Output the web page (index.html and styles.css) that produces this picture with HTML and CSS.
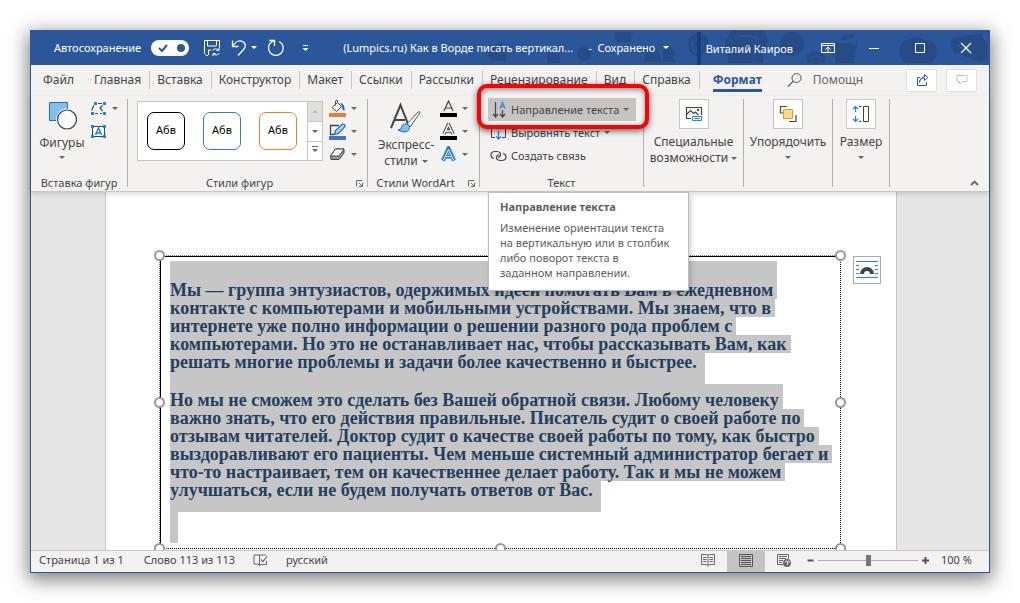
FILE: index.html
```html
<!DOCTYPE html>
<html lang="ru">
<head>
<meta charset="utf-8">
<title>(Lumpics.ru) Как в Ворде писать вертикально</title>
<link rel="stylesheet" href="styles.css">
</head>
<body>
<main class="window">
  <header class="titlebar">
    <svg class="titlebar-art" width="330" height="35" viewBox="0 0 330 35" aria-hidden="true">
      <g fill="#264b86">
        <path d="M-172 22l6-4 6-6 3 1-1 5h5v13h-14z"/>
        <path d="M-44 2h18l-3 10H-42zM-41 14l-7 6M-112 22l13 2v9h-13zM-14 17h12l3 9 2 6H-16l3-6z"/>
        <circle cx="-75" cy="24" r="7"/>
        <path d="M4 20l8-3 5 6-3 3 3 6H4zM30 8q8-8 16-2 6 3 0 12-3 11-10 8-10-6-6-18zM69 7q0-6 8-6h22q12 0 9 12l-4 6v14H69V18q-6-5 0-11z"/>
        <circle cx="133" cy="14" r="12"/><ellipse cx="157" cy="28" rx="10" ry="6"/>
        <path d="M176 12l22 3-3 18h-19zM180 10q5-8 16-6l-1 3-9 3z"/>
        <path d="M248 10q9-5 17 0 14 0 13 12-1 10-8 11h-22q-9-2-7-15 2-8 7-8z"/><path d="M292 9l30-6 6 12v15l-8 2-26-10z"/>
      </g>
      <g fill="none" stroke="#2b579a" stroke-width="1.5"><path d="M34 12q7-6 10 2-2 10-8 8-5-4-2-10M76 8q14-5 23 1l-4 8v16M152 28q5-5 10 0M256 15v10M298 15l15 9"/></g>
    </svg>
    <label class="autosave">Автосохранение
      <span class="switch"><input type="checkbox" checked><svg width="38" height="16" viewBox="0 0 38 16"><path d="M8 8l3 3 5-6" fill="none" stroke="#2b579a" stroke-width="2"/><circle cx="30" cy="8" r="4" fill="#2b579a"/></svg></span>
    </label>
    <div class="quick">
      <button aria-label="Сохранить"><svg width="18" height="18" viewBox="0 0 18 18"><path d="M5 16.500H3.500l-2-2v-13h15V9M4.500 2v5H13M13.500 2v5M5.500 16v-5H8M9.500 11.500a4 4 0 0 1 6.500 0v-2.500M16 11.500h-2.500M16.500 14a4 4 0 0 1-6.500.5v2.500M10 14.500h2.500" fill="none" stroke="#fff"/></svg></button>
      <button class="undo" aria-label="Отменить"><svg width="16" height="18" viewBox="0 0 16 18"><path d="M1.500 1.500v6h6M1.500 7.500C4 3 8 1 11.500 2.500c4 2 3 6 1 8L7 16.500" fill="none" stroke="#fff" stroke-width="1.300"/></svg><i class="caret"></i></button>
      <button aria-label="Повторить"><svg width="18" height="18" viewBox="0 0 18 18"><path d="M2 1.500h5.500V7M7 2C3.500 3 1.500 5.500 1.500 9a7.300 7.300 0 0 0 14.700 0c0-3-1.500-5-4-6.500" fill="none" stroke="#fff" stroke-width="1.300"/></svg></button>
      <button class="more" aria-label="Настройка панели"><svg width="7" height="8" viewBox="0 0 7 8"><path d="M1 1.500h5" stroke="#fff"/><path d="M.500 4h6L3.500 7z" fill="#fff"/></svg></button>
    </div>
    <h1 class="doc-title">(Lumpics.ru) Как в Ворде писать вертикал...</h1>
    <button class="saved">-&nbsp; Сохранено<i class="caret"></i></button>
    <button class="user">Виталий Каиров</button>
    <div class="controls">
      <button aria-label="Параметры ленты"><svg width="14" height="12" viewBox="0 0 14 12"><path d="M.500 1.500h13v9H.500zM.500 3.500h13M7 10V5M4.500 7.500L7 5l2.500 2.500" fill="none" stroke="#fff"/></svg></button>
      <button aria-label="Свернуть"><svg width="12" height="12" viewBox="0 0 12 12"><path d="M1 6.500h10" stroke="#fff"/></svg></button>
      <button aria-label="Развернуть"><svg width="12" height="12" viewBox="0 0 12 12"><path d="M1.500 1.500h9v9h-9z" fill="none" stroke="#fff"/></svg></button>
      <button aria-label="Закрыть"><svg width="12" height="12" viewBox="0 0 12 12"><path d="M1 1l10 10M11 1L1 11" stroke="#fff" stroke-width="1.200"/></svg></button>
    </div>
  </header>

  <nav class="tabs">
    <a class="tab file" href="#">Файл</a><a class="tab" href="#">Главная</a><a class="tab" href="#">Вставка</a><a class="tab" href="#">Конструктор</a><a class="tab" href="#">Макет</a><a class="tab" href="#">Ссылки</a><a class="tab" href="#">Рассылки</a><a class="tab" href="#">Рецензирование</a><a class="tab" href="#">Вид</a><a class="tab" href="#">Справка</a><a class="tab active" href="#" aria-current="page"><span>Формат</span></a>
    <label class="search"><svg width="16" height="16" viewBox="0 0 16 16"><circle cx="9.500" cy="6" r="4.500" fill="none" stroke="#555"/><path d="M6.300 9.200L1 14.500" stroke="#555" stroke-width="1.200"/></svg><input type="text" placeholder="Помощник" aria-label="Помощник"></label>
    <div class="tab-actions">
      <button aria-label="Поделиться"><svg width="14" height="14" viewBox="0 0 14 14"><path d="M5 4.500H2.500v8h9V9M4.500 9.500C5 6 7 5 9.500 5v2.500L13 4.500 9.500 1.500V4C7 4 4.500 6 4.500 9.500z" fill="none" stroke="#2b579a"/></svg></button>
      <button aria-label="Примечания"><svg width="12" height="12" viewBox="0 0 12 12"><path d="M1 1.500h10v6H6L3.500 10V7.500H1z" fill="none" stroke="#c3c1bf"/></svg></button>
    </div>
  </nav>

  <section class="ribbon">
    <div class="group shapes">
      <div class="group-body">
        <button class="big"><svg width="30" height="32" viewBox="0 0 30 32"><path d="M2.500 3.500h18v18h-18z" fill="#83beec" stroke="#1e71bd"/><circle cx="20" cy="20.500" r="11" fill="#f3f2f1"/><circle cx="20" cy="20.500" r="9.500" fill="#fafafa" stroke="#444" stroke-width="1.200"/></svg><span>Фигуры</span><i class="caret"></i></button>
        <div class="stack">
          <button class="tool" aria-label="Изменить фигуру"><svg width="17" height="15" viewBox="0 0 17 15"><path d="M8 2.500h4M12.500 4.500L10 7l2.500 3M5 12.500h3M10 12.500h2M2 9.500q0-3 2-5" fill="none" stroke="#444" stroke-width="1.200"/><path d="M4 1h3v3H4zM13 1h3v3h-3zM1 11h3v3H1zM13 11h3v3h-3z" fill="#1e88d0"/></svg><i class="caret"></i></button>
          <button class="tool" aria-label="Надпись"><svg width="17" height="15" viewBox="0 0 17 15"><path d="M2.500 2.500h12v10h-12z" fill="#fff" stroke="#444"/><path d="M1 1h3v3H1zM13 1h3v3h-3zM1 11h3v3H1zM13 11h3v3h-3z" fill="#1e88d0"/><path d="M5.500 11l3-7 3 7M6.500 9h4" fill="none" stroke="#1e88d0" stroke-width="1.500"/></svg></button>
        </div>
      </div>
      <h2>Вставка фигур</h2>
    </div>

    <div class="group styles">
      <div class="group-body">
        <div class="gallery">
          <div class="samples"><button class="sample black">Абв</button><button class="sample blue">Абв</button><button class="sample orange">Абв</button></div>
          <div class="scroll"><button class="off" aria-label="Вверх"><i class="caret up"></i></button><button aria-label="Вниз"><i class="caret"></i></button><button aria-label="Ещё"><i class="caret bar"></i></button></div>
        </div>
        <div class="stack">
          <button class="tool" aria-label="Заливка"><svg width="17" height="17" viewBox="0 0 17 17"><path d="M8.500 2.500L3 7.500 7.500 11.500 12.500 6.500 8.500 2.500V.500q-2-1-2 1v4" fill="#fff" stroke="#444"/><path d="M11 3q5 0 4.500 8-3-1-2.500-5z" fill="#1e71bd"/><path d="M0 13h17v4H0z" fill="#ed7d31"/></svg><i class="caret"></i></button>
          <button class="tool" aria-label="Контур"><svg width="17" height="17" viewBox="0 0 17 17"><path d="M10 2.500H1.500v9H5" fill="none" stroke="#444" stroke-width="1.300"/><path d="M5.500 11.500l1-4 7-6.500q3 0 2.500 2.500L9.500 10.500z" fill="#a8d3f5" stroke="#1e71bd" stroke-width="1.200"/><path d="M0 13h17v4H0z" fill="#4472c4"/></svg><i class="caret"></i></button>
          <button class="tool" aria-label="Эффекты"><svg width="17" height="17" viewBox="0 0 17 17"><path d="M6.500 3h8.500v4l-5 6.500H2L1.500 10z" fill="#9b9997" stroke="#444"/><path d="M6.500 3H15l-5 7H1.500z" fill="#fff" stroke="#444"/></svg><i class="caret"></i></button>
        </div>
      </div>
      <h2>Стили фигур</h2>
      <button class="launcher" aria-label="Формат фигуры"><svg width="7" height="7" viewBox="0 0 7 7"><path d="M.500 6V.500H6M3 3l3 3M6.500 3v3.500H3" fill="none" stroke="#666"/></svg></button>
    </div>

    <div class="group wordart">
      <div class="group-body">
        <button class="big"><svg width="34" height="32" viewBox="0 0 34 32"><path d="M2 27L11.500 4 19 23M5 19h11" fill="none" stroke="#444" stroke-width="2"/><path d="M18 23L29 11q2-1 2 1L21 26z" fill="#fff" stroke="#555"/><path d="M9 29q4 0 4-4 2-4 7-1 2 6-4 7-4 0-7-2z" fill="#83beec" stroke="#1e71bd"/></svg><span>Экспресс-<br>стили<i class="caret"></i></span></button>
        <div class="stack">
          <button class="tool" aria-label="Заливка текста"><svg width="17" height="17" viewBox="0 0 17 17"><path d="M4 11L8.500 1 13 11M5.500 8h6" fill="none" stroke="#444" stroke-width="1.200"/><path d="M0 13h17v4H0z"/></svg><i class="caret"></i></button>
          <button class="tool" aria-label="Контур текста"><svg width="17" height="17" viewBox="0 0 17 17"><path d="M4 11L8.500 1.500 13 11M6 8h5" fill="none" stroke="#444" stroke-width="3.400"/><path d="M4 11L8.500 1.500 13 11M6 8h5" fill="none" stroke="#fff" stroke-width="1.400"/><path d="M0 13h17v4H0z"/></svg><i class="caret"></i></button>
          <button class="tool" aria-label="Эффекты текста"><svg width="17" height="17" viewBox="0 0 17 17"><path d="M3 14.500L8.500 2.500 14 14.500M5.500 10.500h6" fill="none" stroke="#83beec" stroke-width="5"/><path d="M3 14.500L8.500 2.500 14 14.500M5.500 10.500h6" fill="none" stroke="#1e71bd" stroke-width="3"/><path d="M3.500 14L8.500 3.500 13.500 14M6 10.500h5" fill="none" stroke="#fff"/></svg><i class="caret"></i></button>
        </div>
      </div>
      <h2>Стили WordArt</h2>
      <button class="launcher" aria-label="Формат текста"><svg width="7" height="7" viewBox="0 0 7 7"><path d="M.500 6V.500H6M3 3l3 3M6.500 3v3.500H3" fill="none" stroke="#666"/></svg></button>
    </div>

    <div class="group text">
      <div class="group-body rows">
        <button class="row marked" aria-describedby="tip"><svg width="15" height="18" viewBox="0 0 15 18"><path d="M3.500 1v15M1 13l2.500 3L6 13M10.500 9v7M8 13l2.500 3 2.500-3" fill="none" stroke="#444" stroke-width="1.200"/><path d="M8 7.500L10.500 1.500 13 7.500M9 5.500h3.500" fill="none" stroke="#2b8fd8" stroke-width="1.300"/></svg>Направление текста<i class="caret"></i></button>
        <button class="row"><svg width="17" height="16" viewBox="0 0 17 16"><path d="M4 2.500H1.500v10H5M13 2.500h2.500v10H12" fill="none" stroke="#444"/><path d="M8.500 6v8M6 11.500l2.500 2.500 2.500-2.500M6 3.500h5" fill="none" stroke="#1e88d0" stroke-width="1.300"/></svg>Выровнять текст<i class="caret"></i></button>
        <button class="row"><svg width="17" height="12" viewBox="0 0 17 12"><path d="M4 8.500Q1 8 1 5t3.500-3.500H7Q11 2 10.500 5 10 7 8 7.500M13 3.500Q16 4 16 7t-3.500 3.500H10Q6 10 6.500 7 7 5 9 4.500" fill="none" stroke="#444" stroke-width="1.200"/></svg>Создать связь</button>
      </div>
      <h2>Текст</h2>
    </div>

    <div class="group access"><button class="tile"><span class="icon"><svg width="18" height="18" viewBox="0 0 18 18"><path d="M6 13.500H1.500v-11h15V10M1.500 9.500L5.500 5.500l3 3 2-1.500 3 3" fill="none" stroke="#444" stroke-width="1.200"/><path d="M12 4h2v2h-2z" fill="#444"/><path d="M7.500 11.500h9v4h-9zM9.500 13.500h5" fill="#fff" stroke="#1e88d0"/></svg></span><span>Специальные<br>возможности<i class="caret"></i></span></button></div>
    <div class="group arrange"><button class="tile"><span class="icon"><svg width="18" height="18" viewBox="0 0 18 18"><path d="M8 1.500H1.500V8H4M17 10v6.500h-7" fill="none" stroke="#444" stroke-width="1.200"/><path d="M4.500 4.500h9v9h-9z" fill="#fcd88b" stroke="#e8913a"/></svg></span><span>Упорядочить</span><i class="caret"></i></button></div>
    <div class="group size"><button class="tile"><span class="icon"><svg width="18" height="18" viewBox="0 0 18 18"><path d="M3.500 2v5M3.500 16v-5M1 4l2.500-2.500L6 4M1 14l2.500 2.500L6 14" fill="none" stroke="#1e88d0" stroke-width="1.200"/><path d="M11.500 1.500h5v15h-5zM7 1.500h2.500M7 16.500h2.500" fill="none" stroke="#444"/></svg></span><span>Размер</span><i class="caret"></i></button></div>
    <button class="collapse" aria-label="Свернуть ленту"><svg width="9" height="6" viewBox="0 0 9 6"><path d="M1 5l3.500-3.500L8 5" fill="none" stroke="#666" stroke-width="1.800"/></svg></button>

    <div class="tooltip" id="tip" role="tooltip"><strong>Направление текста</strong><p>Изменение ориентации текста на вертикальную или в столбик либо поворот текста в<br>заданном направлении.</p></div>
  </section>

  <section class="workspace">
    <article class="page">
      <div class="textbox">
        <i class="handle tl"></i><i class="handle tr"></i><i class="handle ml"></i><i class="handle mr"></i><i class="handle bl"></i><i class="handle bc"></i><i class="handle br"></i>
        <p class="first"><span>Мы — группа энтузиастов, одержимых идеей помогать Вам в ежедневном</span><span>контакте с компьютерами и мобильными устройствами. Мы знаем, что в</span><span>интернете уже полно информации о решении разного рода проблем с</span><span>компьютерами. Но это не останавливает нас, чтобы рассказывать Вам, как</span><span>решать многие проблемы и задачи более качественно и быстрее.</span></p>
        <p><span>Но мы не сможем это сделать без Вашей обратной связи. Любому человеку</span><span>важно знать, что его действия правильные. Писатель судит о своей работе по</span><span>отзывам читателей. Доктор судит о качестве своей работы по тому, как быстро</span><span>выздоравливают его пациенты. Чем меньше системный администратор бегает и</span><span>что-то настраивает, тем он качественнее делает работу. Так и мы не можем</span><span>улучшаться, если не будем получать ответов от Вас.</span></p>
        <div class="end-mark"></div>
        <button class="layout-options" aria-label="Параметры разметки"><svg width="24" height="24" viewBox="0 0 24 24"><path d="M1 3.500h22M1 7.500h3M20 7.500h3M1 11.500h3M20 11.500h3M1 15.500h3M20 15.500h3M1 19.500h22" stroke="#1e88d0"/><path d="M7 16a5 5 0 0 1 10 0" fill="none" stroke="#444" stroke-width="4"/></svg></button>
      </div>
    </article>
  </section>

  <footer class="status">
    <span>Страница 1 из 1</span><span>Слово 113 из 113</span>
    <button class="proof" aria-label="Правописание"><svg width="15" height="14" viewBox="0 0 15 14"><path d="M6.500 2v11M6.500 2H1v9h4l1.500 1.500L8 11.500h5.500V8M6.500 2H13" fill="none" stroke="#666"/><path d="M8 6.500l2 2 4-5" fill="none" stroke="#666" stroke-width="1.200"/></svg></button>
    <span>русский</span>
    <div class="views">
      <button aria-label="Режим чтения"><svg width="14" height="14" viewBox="0 0 14 14"><path d="M7 1.500v12M.500 1.500h5L7 2.500l1.500-1h5v10h-5L7 12.500l-1.500-1h-5zM2 4.500h3.500M2 6.500h3.500M2 8.500h3.500M8.500 4.500H12M8.500 6.500H12M8.500 8.500H12" fill="none" stroke="#666"/></svg></button>
      <button class="current" aria-label="Разметка страницы"><svg width="14" height="14" viewBox="0 0 14 14"><path d="M.500 1.500h13v12H.500zM2 3.500h10M2 5.500h10M2 7.500h10M2 9.500h10M2 11.500h10" fill="none" stroke="#555"/></svg></button>
      <button aria-label="Веб-документ"><svg width="14" height="14" viewBox="0 0 14 14"><path d="M6 11.500H.500v-10h11V6M2 3.500h8M2 5.500h7M2 7.500h4M2 9.500h3" fill="none" stroke="#666"/><circle cx="10" cy="10" r="4" fill="#666"/><path d="M8 9l2-1 1 2-1 2M11.500 7.500l1 2" stroke="#f3f2f1" fill="none"/></svg></button>
    </div>
    <button class="step" aria-label="Уменьшить"><svg width="7" height="7" viewBox="0 0 7 7"><path d="M.500 3.500h6" stroke="#555" stroke-width="2"/></svg></button>
    <input class="zoom" type="range" min="0" max="100" value="50" aria-label="Масштаб">
    <button class="step" aria-label="Увеличить"><svg width="7" height="7" viewBox="0 0 7 7"><path d="M0 3.500h7M3.500 0v7" stroke="#555" stroke-width="2"/></svg></button>
    <span class="percent">100 %</span>
  </footer>
</main>
</body>
</html>
```

FILE: styles.css
```css
* { box-sizing: border-box; }
body { margin: 0; padding: 30px; background: #fff; color: #444; font: 12px/16px "Noto Sans", "Open Sans", sans-serif; }
button, input { font: inherit; color: inherit; margin: 0; padding: 0; border: 0; background: none; }
button { display: flex; align-items: center; justify-content: center; white-space: nowrap; }
svg { display: block; flex: none; }
h1, h2, p { margin: 0; font: inherit; }
a { color: inherit; text-decoration: none; }
.caret { display: inline-block; flex: none; border: 3px solid transparent; border-top-color: currentColor; border-bottom: 0; }

.window { display: flex; flex-direction: column; height: calc(100vh - 60px); min-height: 400px; border: 1px solid #2b579a; border-top: 0; background: #f3f2f1; box-shadow: 0 5px 18px 2px rgba(0, 0, 0, .5); }

.titlebar { position: relative; display: flex; align-items: center; flex: none; height: 35px; padding-left: 23px; background: #2b579a; color: #fff; font-size: 11px; }
.titlebar-art { position: absolute; right: 0; top: 0; overflow: visible; }
.titlebar > :not(.titlebar-art) { position: relative; }
.autosave { display: flex; align-items: center; gap: 10px; }
.switch { position: relative; display: block; height: 16px; }
.switch input { display: block; appearance: none; width: 38px; height: 16px; border-radius: 8px; background: #fff; }
.switch svg { position: absolute; inset: 0; pointer-events: none; }
.quick { display: flex; align-items: center; gap: 10px; margin-left: 14px; }
.undo { gap: 4px; }
.more { margin-left: 7px; }
.doc-title { margin-left: 34px; white-space: nowrap; }
.saved { margin-left: 15px; }
.saved .caret { margin-left: 8px; }
.user { height: 33px; margin: 2px 0 0 auto; padding-left: 5px; border-left: 4px solid #173f75; }
.controls { display: flex; margin-left: 12px; }
.controls button { width: 46px; height: 34px; }

.tabs { display: flex; align-items: center; flex: none; height: 31px; padding: 0 0 1px 5px; }
.tab { display: flex; align-items: center; height: 18px; padding: 0 8px 0 7px; border-right: 1px solid #c8c6c4; white-space: nowrap; }
.tab.file { padding-right: 13px; border-right: 0; }
.tab.active { padding: 0 0 0 13px; border: 0; color: #2b579a; font-weight: 700; }
.tab.active span { padding: 4px 0 1px; border-bottom: 3px solid #2b579a; }
.search { display: flex; align-items: center; gap: 10px; margin-left: 25px; }
.search input { width: 50px; }
.search input::placeholder { color: #666; opacity: 1; }
.tab-actions { display: flex; gap: 9px; margin: 0 12px 0 auto; }
.tab-actions button { width: 31px; height: 23px; border: 1px solid #e1dfdd; border-radius: 2px; background: #fff; }

.ribbon { position: relative; z-index: 2; display: flex; flex: none; padding: 3px 0 4px; border-bottom: 1px solid #c8c6c4; box-shadow: 0 2px 5px rgba(0, 0, 0, .15); }
.group { position: relative; display: flex; flex-direction: column; height: 88px; border-right: 1px solid #b3b0ad; }
.group h2 { margin-top: auto; font-size: 11px; line-height: 8px; text-align: center; white-space: nowrap; }
.group-body { display: flex; }
.launcher { position: absolute; right: 4px; bottom: 0; }
.shapes { width: 97px; }
.styles { width: 240px; }
.wordart { width: 112px; }
.text { width: 164px; }
.access { width: 100px; }
.arrange { width: 89px; }
.size { width: 57px; }
.styles h2, .wordart h2 { padding-right: 16px; }
.big { flex-direction: column; }
.big svg { margin-bottom: 4px; }
.big .caret { margin-top: 5px; }
.big span .caret { margin: 0 0 2px 4px; }
.shapes .big { padding-left: 9px; width: 53px; }
.wordart .big { padding: 2px 0 0 7px; width: 69px; }
.stack { display: flex; flex-direction: column; gap: 6px; }
.tool { gap: 5px; justify-content: flex-start; }
.tool .caret, .row .caret, .tile .caret, .big .caret, .scroll .caret { border-top-color: #666; }
.scroll .up { border-top-color: #bbb; }
.shapes .stack { gap: 8px; padding: 2px 0 0 6px; }
.styles .stack { padding: 1px 0 0 6px; }
.wordart .stack { padding: 1px 0 0 3px; }
.gallery { display: flex; width: 186px; height: 60px; margin: 2px 0 0 9px; border: 1px solid #c8c6c4; background: #fff; }
.samples { display: flex; flex: 1; gap: 18px; padding: 10px 0 0 9px; }
.sample { width: 38px; height: 38px; border: 1px solid; border-radius: 7px; font-size: 11px; padding-bottom: 3px; color: #000; }
.black { border-color: #000; }
.blue { border-color: #4472c4; }
.orange { border-color: #ed7d31; }
.scroll { display: grid; grid-template-rows: repeat(3, 1fr); width: 15px; border-left: 1px solid #c8c6c4; }
.scroll button + button { border-top: 1px solid #c8c6c4; }
.off { background: #e1dfdd; }
.up { transform: rotate(180deg); }
.bar { position: relative; }
.bar::before { content: ""; position: absolute; left: -3px; top: -6px; width: 6px; height: 1px; background: #666; }

.rows { flex-direction: column; align-items: flex-start; margin-top: -1px; padding-left: 8px; font-size: 11px; }
.row { gap: 4px; height: 23px; padding-left: 2px; }
.marked { position: relative; z-index: 1; gap: 4px; width: 148px; padding-left: 4px; justify-content: flex-start; background: #c6c4c2; }
.marked::before { content: ""; position: absolute; z-index: -1; inset: -14px -13px -8px -11px; border: 4px solid #f00; border-radius: 10px; box-shadow: 0 2px 6px rgba(0, 0, 0, .6), inset 0 2px 5px rgba(0, 0, 0, .4); background: linear-gradient(#c6c4c2, #c6c4c2) 7px 10px / 148px 23px no-repeat #f3f2f1; }
.tile { flex-direction: column; }
.icon { display: grid; place-items: center; width: 30px; height: 30px; margin-bottom: 5px; border: 1px solid #c8c6c4; background: #fdfdfc; }
.tile > .caret { margin-top: 6px; }
.tile span .caret { margin: 0 0 2px 3px; }
.collapse { align-self: flex-end; margin: 0 10px 1px auto; }
.tooltip { position: absolute; left: 457px; top: 96px; width: 201px; padding: 6px 11px 10px; border: 1px solid #c0bebc; background: #fff; box-shadow: 2px 3px 5px rgba(0, 0, 0, .2); color: #5f5d5b; font-size: 11px; line-height: 15px; }
.tooltip p { margin-top: 6px; }

.workspace { flex: 1; min-height: 0; overflow: hidden; display: flex; justify-content: center; padding-right: 18px; background: #e6e6e6; }
.page { width: 792px; padding: 63px 55px 0 53px; border: solid #c8c6c4; border-width: 0 1px; background: #fff; }
.textbox { position: relative; height: 294px; padding: 5px 0 0 10px; border: 1px dotted #000; border-top-color: #777; border-left-color: #777; box-shadow: inset 1px 1px #000; color: #1f4062; font: bold 18px/18px "Liberation Serif", serif; }
.textbox span { display: block; width: fit-content; padding-right: 4px; background: #c6c6c6; white-space: nowrap; }
.textbox span:first-child { padding-top: 7px; }
.textbox .first span:first-child { padding-top: 20px; }
.textbox span:last-child { padding: 0 8px 13px 0; }
.end-mark { width: 8px; height: 31px; background: #c6c6c6; }
.handle { position: absolute; width: 11px; height: 11px; border: 2px solid #999; border-radius: 50%; background: #fff; }
.tl, .tr { top: -6px; }
.ml, .mr { top: 141px; }
.bl, .bc, .br { bottom: -6px; }
.tl, .ml, .bl { left: -6px; }
.tr, .mr, .br { right: -6px; }
.bc { left: calc(50% - 5px); }
.layout-options { position: absolute; right: -41px; top: 0; width: 28px; height: 28px; border: 1px solid #aaa; background: #fff; }

.status { display: flex; align-items: center; flex: none; height: 22px; padding: 0 0 3px 8px; border-top: 1px solid #c8c6c4; font-size: 11px; white-space: nowrap; }
.status > span + span { margin-left: 20px; }
.proof { margin: 0 18px; }
.views { display: flex; align-self: stretch; margin: 0 0 -3px auto; }
.views button { width: 38px; padding-bottom: 3px; }
.current { background: #c6c4c2; }
.step { width: 15px; height: 18px; }
.zoom { appearance: none; width: 100px; height: 12px; margin: 0; background: linear-gradient(#b0aeac, #b0aeac) center / 100% 1px no-repeat; }
.zoom::-webkit-slider-thumb { appearance: none; width: 5px; height: 11px; background: #777; }
.status > .percent { width: 48px; margin-left: 8px; }
```
